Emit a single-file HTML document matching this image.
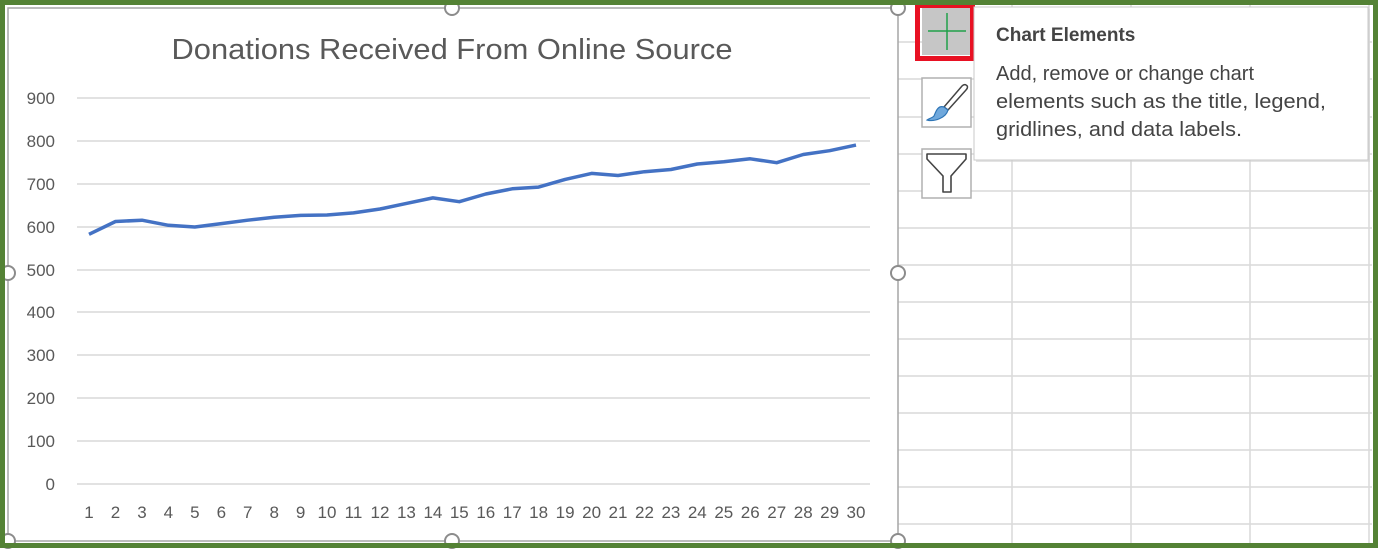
<!DOCTYPE html>
<html><head><style>
html,body{margin:0;padding:0;background:#fff;}
svg{display:block;font-family:"Liberation Sans",sans-serif;}
</style></head><body>
<svg width="1379" height="549" viewBox="0 0 1379 549" xmlns="http://www.w3.org/2000/svg">
<rect x="0" y="0" width="1379" height="549" fill="#fff"/>
<g stroke="#d9d9d9" stroke-width="1.5">
<line x1="898" y1="42" x2="1372" y2="42"/>
<line x1="898" y1="79" x2="1372" y2="79"/>
<line x1="898" y1="117" x2="1372" y2="117"/>
<line x1="898" y1="154" x2="1372" y2="154"/>
<line x1="898" y1="191" x2="1372" y2="191"/>
<line x1="898" y1="228" x2="1372" y2="228"/>
<line x1="898" y1="265" x2="1372" y2="265"/>
<line x1="898" y1="302" x2="1372" y2="302"/>
<line x1="898" y1="339" x2="1372" y2="339"/>
<line x1="898" y1="376" x2="1372" y2="376"/>
<line x1="898" y1="413" x2="1372" y2="413"/>
<line x1="898" y1="450" x2="1372" y2="450"/>
<line x1="898" y1="487" x2="1372" y2="487"/>
<line x1="898" y1="524" x2="1372" y2="524"/>
<line x1="1012" y1="5" x2="1012" y2="544"/>
<line x1="1131" y1="5" x2="1131" y2="544"/>
<line x1="1250" y1="5" x2="1250" y2="544"/>
<line x1="1369" y1="5" x2="1369" y2="544"/>
</g>
<rect x="8" y="8" width="890" height="533" fill="#fff" stroke="#a6a6a6" stroke-width="1.5"/>
<text x="452" y="59" text-anchor="middle" font-size="29" fill="#595959" textLength="561" lengthAdjust="spacingAndGlyphs">Donations Received From Online Source</text>
<g stroke="#d9d9d9" stroke-width="1.5">
<line x1="77" y1="98" x2="870" y2="98"/>
<line x1="77" y1="141" x2="870" y2="141"/>
<line x1="77" y1="184" x2="870" y2="184"/>
<line x1="77" y1="227" x2="870" y2="227"/>
<line x1="77" y1="270" x2="870" y2="270"/>
<line x1="77" y1="312" x2="870" y2="312"/>
<line x1="77" y1="355" x2="870" y2="355"/>
<line x1="77" y1="398" x2="870" y2="398"/>
<line x1="77" y1="441" x2="870" y2="441"/>
<line x1="77" y1="484" x2="870" y2="484"/>
</g>
<g font-size="17" fill="#595959" text-anchor="end">
<text x="55" y="104">900</text><text x="55" y="147">800</text><text x="55" y="190">700</text>
<text x="55" y="233">600</text><text x="55" y="276">500</text><text x="55" y="318">400</text>
<text x="55" y="361">300</text><text x="55" y="404">200</text><text x="55" y="447">100</text>
<text x="55" y="490">0</text>
</g>
<g font-size="17" fill="#595959" text-anchor="middle">
<text x="89" y="518">1</text><text x="115.5" y="518">2</text><text x="142" y="518">3</text><text x="168.4" y="518">4</text><text x="194.8" y="518">5</text><text x="221.3" y="518">6</text><text x="247.7" y="518">7</text><text x="274.2" y="518">8</text><text x="300.6" y="518">9</text><text x="327" y="518">10</text><text x="353.5" y="518">11</text><text x="380" y="518">12</text><text x="406.4" y="518">13</text><text x="432.9" y="518">14</text><text x="459.3" y="518">15</text><text x="485.8" y="518">16</text><text x="512.2" y="518">17</text><text x="538.6" y="518">18</text><text x="565.1" y="518">19</text><text x="591.6" y="518">20</text><text x="618" y="518">21</text><text x="644.5" y="518">22</text><text x="670.9" y="518">23</text><text x="697.3" y="518">24</text><text x="723.8" y="518">25</text><text x="750.2" y="518">26</text><text x="776.7" y="518">27</text><text x="803.2" y="518">28</text><text x="829.6" y="518">29</text><text x="856" y="518">30</text>
</g>
<polyline fill="none" stroke="#4472c4" stroke-width="3.5" stroke-linejoin="round" points="89,234.3 115.5,221.5 142,220.2 168.4,225.3 194.8,227 221.3,223.6 247.7,220.2 274.2,217.2 300.6,215.4 327,215 353.5,212.9 380,209 406.4,203.4 432.9,197.9 459.3,201.7 485.8,194 512.2,188.8 538.6,187.1 565.1,179.4 591.6,173.4 618,175.5 644.5,171.7 670.9,169.5 697.3,164 723.8,161.8 750.2,158.8 776.7,162.7 803.2,154.5 829.6,150.7 856,145.1"/>
<g fill="#fff" stroke="#8c8c8c" stroke-width="2">
<circle cx="452" cy="8" r="7"/><circle cx="898" cy="8" r="7"/>
<circle cx="8" cy="273" r="7"/><circle cx="898" cy="273" r="7"/>
<circle cx="8" cy="541" r="7"/><circle cx="452" cy="541" r="7"/><circle cx="898" cy="541" r="7"/>
</g>
<rect x="922" y="8" width="48" height="47" fill="#c6c6c6"/>
<rect x="917.5" y="5.5" width="55" height="53" fill="none" stroke="#e81123" stroke-width="5"/>
<line x1="947" y1="13" x2="947" y2="50" stroke="#21a04a" stroke-width="1.5"/>
<line x1="928" y1="31" x2="966" y2="31" stroke="#21a04a" stroke-width="1.5"/>
<rect x="922" y="78" width="49" height="49" fill="#fff" stroke="#b0b0b0" stroke-width="1.5"/>
<path d="M966,85 C968,86 968,88 966,90 L948,110 L944,107 L962,86 C963,85 965,84 966,85 Z" fill="#fff" stroke="#444" stroke-width="1.5"/>
<path d="M944,107 C938,105 936,111 934,116 C932,118 928,119 927,120 C934,122 946,118 948,110 Z" fill="#6fa8dc" stroke="#2e75b6" stroke-width="1.2"/>
<rect x="922" y="149" width="49" height="49" fill="#fff" stroke="#b0b0b0" stroke-width="1.5"/>
<path d="M927,154 L966,154 L966,159 L951,176 L951,192 L943,192 L943,176 L927,159 Z" fill="#fff" stroke="#444" stroke-width="1.6" stroke-linejoin="round"/>
<rect x="976" y="9" width="394" height="153" fill="#d0d0d0" opacity="0.6"/>
<rect x="974" y="7" width="394" height="153" fill="#fff" stroke="#c8c8c8" stroke-width="1"/>
<text x="996" y="41" font-size="19" font-weight="bold" fill="#444">Chart Elements</text>
<g font-size="20" fill="#444">
<text x="996" y="80" textLength="258" lengthAdjust="spacingAndGlyphs">Add, remove or change chart</text>
<text x="996" y="108" textLength="330" lengthAdjust="spacingAndGlyphs">elements such as the title, legend,</text>
<text x="996" y="136" textLength="246" lengthAdjust="spacingAndGlyphs">gridlines, and data labels.</text>
</g>
<rect x="2.5" y="2.5" width="1373" height="543" fill="none" stroke="#548235" stroke-width="5"/>
</svg>
</body></html>
